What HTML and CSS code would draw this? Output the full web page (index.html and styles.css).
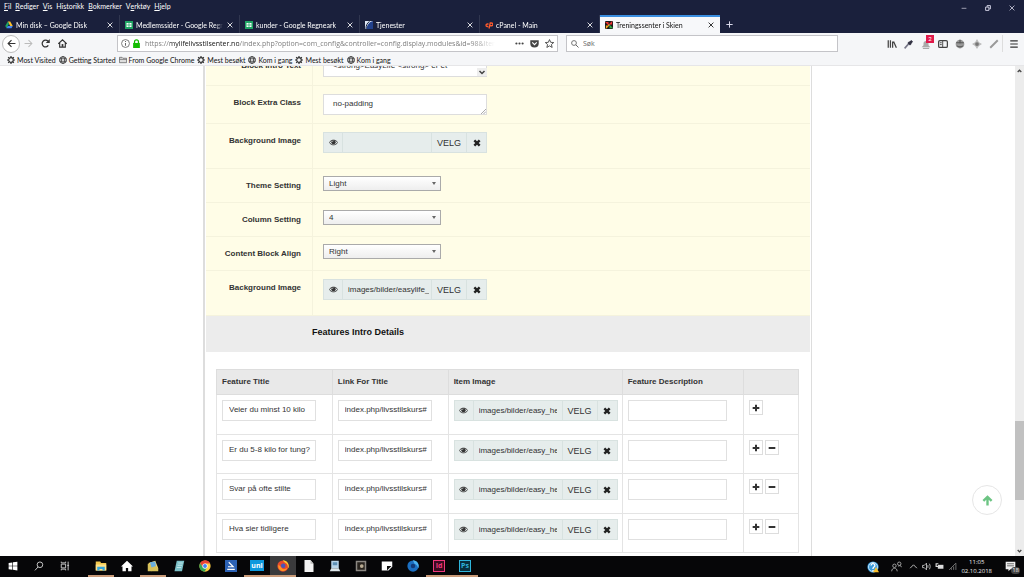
FILE: index.html
```html
<!DOCTYPE html>
<html lang="no">
<head>
<meta charset="utf-8">
<title>Treningssenter i Skien</title>
<link rel="stylesheet" href="styles.css">
</head>
<body>
<svg class="sprite" aria-hidden="true">
  <symbol id="eye" viewBox="0 0 16 12"><path d="M0.5 6C4 0.5 12 0.5 15.5 6 12 11.500 4 11.500 0.500 6z" fill="none" stroke="#333" stroke-width="1.600"/><circle cx="8" cy="5.500" r="3.800" fill="#333"/><path d="M6 5a2 2 0 0 1 2-2" fill="none" stroke="#dfe8e6"/></symbol>
  <symbol id="cross" viewBox="0 0 12 12"><path d="M2 2l8 8M10 2l-8 8" stroke="#222" stroke-width="3.600"/></symbol>
  <symbol id="plus" viewBox="0 0 12 12"><path d="M6 1v10M1 6h10" stroke="#333" stroke-width="3"/></symbol>
  <symbol id="minus" viewBox="0 0 12 12"><path d="M1 6h10" stroke="#333" stroke-width="3"/></symbol>
  <symbol id="close" viewBox="0 0 10 10"><path d="M1 1l8 8M9 1l-8 8" stroke="currentColor" stroke-width="1.400"/></symbol>
  <symbol id="gear" viewBox="0 0 16 16"><circle cx="8" cy="8" r="4.600" fill="none" stroke="#333" stroke-width="2.400"/><path d="M8 0v3M8 13v3M0 8h3M13 8h3M2.300 2.300l2 2M11.700 11.700l2 2M13.700 2.300l-2 2M4.300 11.700l-2 2" stroke="#333" stroke-width="2.400"/></symbol>
  <symbol id="globe" viewBox="0 0 16 16"><circle cx="8" cy="8" r="6.800" fill="none" stroke="#333" stroke-width="1.800"/><ellipse cx="8" cy="8" rx="3.200" ry="6.800" fill="none" stroke="#333" stroke-width="1.500"/><path d="M1 5.500h14M1 10.500h14" stroke="#333" stroke-width="1.500"/></symbol>
  <symbol id="folder" viewBox="0 0 18 16"><path d="M1 2h6l2 2h8v10H1zM1 6.500h16" fill="#ddd" stroke="#555" stroke-width="1.500"/></symbol>
  <symbol id="sheet" viewBox="0 0 16 16"><path d="M0 0h16v16H0z" fill="#1fa463"/><path d="M3 4h10v8H3z" fill="#fff"/><path d="M3 8h10M8 4v8" stroke="#1fa463" stroke-width="1.500"/></symbol>
</svg>

<header class="browser">
  <div class="titlebar">
    <nav class="menu">
      <button><u>F</u>il</button><button><u>R</u>ediger</button><button><u>V</u>is</button><button>Hi<u>s</u>torikk</button><button><u>B</u>okmerker</button><button>V<u>e</u>rktøy</button><button><u>H</u>jelp</button>
    </nav>
    <div class="window-buttons">
      <button aria-label="Minimer"><svg viewBox="0 0 10 10"><path d="M1 5.500h8" stroke="#aab" stroke-width="1.500"/></svg></button>
      <button aria-label="Gjenopprett"><svg viewBox="0 0 10 10"><path d="M1 3.500h5.500V9H1zM3.500 3V1H9v5.500H7" fill="none" stroke="#dde" stroke-width="1.500"/></svg></button>
      <button aria-label="Lukk"><svg viewBox="0 0 10 10"><use href="#close"/></svg></button>
    </div>
  </div>
  <div class="tabs">
    <div class="tab"><svg class="fav" viewBox="0 0 16 16"><path d="M5.500 1h5l5 9h-5z" fill="#fbc02d"/><path d="M5.500 1L0.500 10 3 14.500 8 5.500z" fill="#1da462"/><path d="M5.500 10h10L13 14.500H3z" fill="#4285f4"/></svg><span class="tab-name">Min disk – Google Disk</span><button class="tab-close" aria-label="Lukk fane"><svg><use href="#close"/></svg></button></div>
    <div class="tab"><svg class="fav"><use href="#sheet"/></svg><span class="tab-name">Medlemssider - Google Regneark</span><button class="tab-close" aria-label="Lukk fane"><svg><use href="#close"/></svg></button></div>
    <div class="tab"><svg class="fav"><use href="#sheet"/></svg><span class="tab-name">kunder - Google Regneark</span><button class="tab-close" aria-label="Lukk fane"><svg><use href="#close"/></svg></button></div>
    <div class="tab"><svg class="fav" viewBox="0 0 16 16"><path d="M1 0h15v16H1z" fill="#22418c"/><path d="M16 0C8 2 4 8 3 16H0V0z" fill="#dfe7f5"/><path d="M9 1C4 4 2 9 2 16" fill="none" stroke="#16233f" stroke-width="2"/></svg><span class="tab-name">Tjenester</span><button class="tab-close" aria-label="Lukk fane"><svg><use href="#close"/></svg></button></div>
    <div class="tab"><svg class="fav" viewBox="0 0 16 16"><path d="M7 6H4.500a2.500 2.500 0 0 0 0 5H6.500M8 15L10.500 4H13a2.500 2.500 0 0 1 0 5.500H10.500" fill="none" stroke="#ff5a2c" stroke-width="2.600"/></svg><span class="tab-name">cPanel - Main</span><button class="tab-close" aria-label="Lukk fane"><svg><use href="#close"/></svg></button></div>
    <div class="tab active"><svg class="fav" viewBox="0 0 16 16"><rect width="16" height="16" rx="2" fill="#1a1a1a"/><path d="M8 8L3 3h4M8 8l5-5v4" stroke="#e33" stroke-width="2.500" fill="none"/><path d="M8 8l-5 5V9" stroke="#f9a41a" stroke-width="2.500" fill="none"/><path d="M8 8l5 5H9" stroke="#3a4" stroke-width="2.500" fill="none"/></svg><span class="tab-name">Treningssenter i Skien</span><button class="tab-close" aria-label="Lukk fane"><svg><use href="#close"/></svg></button></div>
    <button class="new-tab" aria-label="Ny fane"><svg viewBox="0 0 10 10"><path d="M5 0.500v9M0.500 5h9" stroke="#dde" stroke-width="1.400"/></svg></button>
  </div>
  <div class="toolbar">
    <div class="nav-buttons">
      <button class="back" aria-label="Tilbake"><svg viewBox="0 0 16 16"><path d="M15 8H2M8 2L2 8l6 6" fill="none" stroke="#333" stroke-width="2"/></svg></button>
      <button aria-label="Frem"><svg viewBox="0 0 16 16"><path d="M1 8h13M8 2l6 6-6 6" fill="none" stroke="#bbb" stroke-width="1.800"/></svg></button>
      <button aria-label="Last på nytt"><svg viewBox="0 0 16 16"><path d="M13 11.500A6 6 0 1 1 12.500 4" fill="none" stroke="#333" stroke-width="2.200"/><path d="M15.500 0v7h-7z" fill="#333"/></svg></button>
      <button aria-label="Hjem"><svg viewBox="0 0 16 16"><path d="M0.500 8.500L8 1.500l7.500 7M3 7v7.500h10V7" fill="none" stroke="#333" stroke-width="2"/><path d="M6.500 9h3v5h-3z" fill="#333"/></svg></button>
    </div>
    <div class="urlbar">
      <svg viewBox="0 0 16 16"><circle cx="8" cy="8" r="7" fill="none" stroke="#666" stroke-width="1.500"/><path d="M8 7v5M8 3.500v2" stroke="#666" stroke-width="1.800"/></svg>
      <svg viewBox="0 0 16 16"><path d="M2 7h12v9H2z" fill="#12bc00"/><path d="M4.500 8V5a3.500 3.500 0 0 1 7 0v3" fill="none" stroke="#12bc00" stroke-width="2.200"/></svg>
      <input class="url" type="text" aria-label="Adresse" value="https://mylifelivsstilsenter.no/index.php?option=com_config&amp;controller=config.display.modules&amp;id=98&amp;Itemid=101">
      <button aria-label="Sidehandlinger"><svg viewBox="0 0 16 16"><g fill="#444"><circle cx="2.500" cy="8" r="1.900"/><circle cx="8" cy="8" r="1.900"/><circle cx="13.500" cy="8" r="1.900"/></g></svg></button>
      <button aria-label="Pocket"><svg viewBox="0 0 16 16"><path d="M0.500 2h15v6a7.500 7 0 0 1-15 0z" fill="#444"/><path d="M4 6l4 4 4-4" fill="none" stroke="#fff" stroke-width="2"/></svg></button>
      <button aria-label="Bokmerk"><svg viewBox="0 0 16 16"><path d="M8 1l2.100 4.900 5.400.4-4.100 3.500 1.300 5.200L8 12.200 3.300 15l1.300-5.200L.5 6.300l5.400-.4z" fill="none" stroke="#444" stroke-width="1.600"/></svg></button>
    </div>
    <label class="search"><svg viewBox="0 0 16 16"><circle cx="6" cy="6" r="4.800" fill="none" stroke="#666" stroke-width="1.800"/><path d="M9.500 9.500L15 15" stroke="#666" stroke-width="2"/></svg><input type="search" aria-label="Søk" placeholder="Søk"></label>
    <div class="extensions">
      <button aria-label="Bibliotek"><svg viewBox="0 0 16 16"><path d="M2 2v12M5.500 2v12M9 4v10M10.500 4l4.500 10" stroke="#444" stroke-width="2"/></svg></button>
      <button aria-label="Pipette"><svg viewBox="0 0 16 16"><path d="M1 15l7-8" stroke="#778" stroke-width="2.500"/><path d="M7 5l4 4M9 7l4-4" stroke="#334" stroke-width="4"/></svg></button>
      <button class="alert" aria-label="Varsler"><svg viewBox="0 0 16 16"><path d="M1 13h14l-3-3V7a4 4 0 0 0-8 0v3z" fill="#aaa"/><path d="M3 15h10" stroke="#999" stroke-width="1.500"/></svg><span class="count">2</span></button>
      <button aria-label="Sidestolpe"><svg viewBox="0 0 16 16"><rect x="1" y="2.500" width="14" height="11" rx="2" fill="none" stroke="#444" stroke-width="2"/><path d="M7.500 3v10M3 6h3M3 9h3" stroke="#444" stroke-width="1.500"/></svg></button>
      <button aria-label="Verktøy"><svg viewBox="0 0 16 16"><circle cx="8" cy="8" r="7" fill="#999"/><path d="M2 6h12M3 11c3 2 7 2 10 0M8 1v6" stroke="#555" stroke-width="1.800" fill="none"/></svg></button>
      <button aria-label="Posisjon"><svg viewBox="0 0 16 16"><path d="M8 0l3 5 5 3-5 3-3 5-3-5-5-3 5-3z" fill="#bbb"/><circle cx="8" cy="8" r="3" fill="#777"/></svg></button>
      <button aria-label="Penn"><svg viewBox="0 0 16 16"><path d="M2 14L14 2" stroke="#999" stroke-width="3"/></svg></button>
      <button class="app-menu" aria-label="Meny"><svg viewBox="0 0 16 16"><path d="M2 3h12M2 8h12M2 13h12" stroke="#333" stroke-width="1.800"/></svg></button>
    </div>
  </div>
  <nav class="bookmarks">
    <a href="#"><svg><use href="#gear"/></svg>Most Visited</a>
    <a href="#"><svg><use href="#globe"/></svg>Getting Started</a>
    <a href="#"><svg><use href="#folder"/></svg>From Google Chrome</a>
    <a href="#"><svg><use href="#gear"/></svg>Mest besøkt</a>
    <a href="#"><svg><use href="#globe"/></svg>Kom i gang</a>
    <a href="#"><svg><use href="#gear"/></svg>Mest besøkt</a>
    <a href="#"><svg><use href="#globe"/></svg>Kom i gang</a>
  </nav>
</header>

<div class="viewport">
  <main class="page">
    <form class="panel">
      <div class="settings">
        <div class="row first"><label for="intro">Block Intro Text</label><div class="field"><span class="area"><textarea id="intro" class="text">&lt;strong&gt;EasyLife &lt;strong&gt; er et</textarea><svg class="down" viewBox="0 0 10 8"><path d="M2.500 3L5 5.500 7.500 3" fill="none" stroke="#444" stroke-width="1.500"/></svg></span></div></div>
        <div class="row"><label for="extra">Block Extra Class</label><div class="field"><span class="area"><textarea id="extra" class="text">no-padding</textarea><svg class="grip" viewBox="0 0 6 6"><path d="M0 6L6 0M3 6l3-3" stroke="#999"/></svg></span></div></div>
        <div class="row tall"><label for="bg1">Background Image</label><div class="field"><div class="media"><button type="button" aria-label="Vis"><svg><use href="#eye"/></svg></button><input id="bg1" type="text"><button type="button">VELG</button><button type="button" aria-label="Fjern"><svg><use href="#cross"/></svg></button></div></div></div>
        <div class="row choice"><label for="theme">Theme Setting</label><div class="field"><span class="pick"><select id="theme"><option>Light</option></select></span></div></div>
        <div class="row choice"><label for="column">Column Setting</label><div class="field"><span class="pick"><select id="column"><option>4</option></select></span></div></div>
        <div class="row choice"><label for="align">Content Block Align</label><div class="field"><span class="pick"><select id="align"><option>Right</option></select></span></div></div>
        <div class="row tall"><label for="bg2">Background Image</label><div class="field"><div class="media"><button type="button" aria-label="Vis"><svg><use href="#eye"/></svg></button><input id="bg2" type="text" value="images/bilder/easylife_"><button type="button">VELG</button><button type="button" aria-label="Fjern"><svg><use href="#cross"/></svg></button></div></div></div>
      </div>
      <h2 class="section">Features Intro Details</h2>
      <table class="features">
        <colgroup><col class="c-title"><col class="c-link"><col class="c-image"><col class="c-desc"><col class="c-tools"></colgroup>
        <thead><tr><th>Feature Title</th><th>Link For Title</th><th>Item Image</th><th>Feature Description</th><th></th></tr></thead>
        <tbody>
          <tr>
            <td><input class="cell" aria-label="Feature Title" value="Veier du minst 10 kilo"></td>
            <td><input class="cell" aria-label="Link For Title" value="index.php/livsstilskurs#"></td>
            <td><div class="media"><button type="button" aria-label="Vis"><svg><use href="#eye"/></svg></button><input aria-label="Item Image" value="images/bilder/easy_hea"><button type="button">VELG</button><button type="button" aria-label="Fjern"><svg><use href="#cross"/></svg></button></div></td>
            <td><input class="cell" aria-label="Feature Description"></td>
            <td><div class="tools"><button type="button" aria-label="Legg til"><svg><use href="#plus"/></svg></button></div></td>
          </tr>
          <tr>
            <td><input class="cell" aria-label="Feature Title" value="Er du 5-8 kilo for tung?"></td>
            <td><input class="cell" aria-label="Link For Title" value="index.php/livsstilskurs#"></td>
            <td><div class="media"><button type="button" aria-label="Vis"><svg><use href="#eye"/></svg></button><input aria-label="Item Image" value="images/bilder/easy_hea"><button type="button">VELG</button><button type="button" aria-label="Fjern"><svg><use href="#cross"/></svg></button></div></td>
            <td><input class="cell" aria-label="Feature Description"></td>
            <td><div class="tools"><button type="button" aria-label="Legg til"><svg><use href="#plus"/></svg></button><button type="button" aria-label="Fjern rad"><svg><use href="#minus"/></svg></button></div></td>
          </tr>
          <tr>
            <td><input class="cell" aria-label="Feature Title" value="Svar på ofte stilte"></td>
            <td><input class="cell" aria-label="Link For Title" value="index.php/livsstilskurs#"></td>
            <td><div class="media"><button type="button" aria-label="Vis"><svg><use href="#eye"/></svg></button><input aria-label="Item Image" value="images/bilder/easy_hea"><button type="button">VELG</button><button type="button" aria-label="Fjern"><svg><use href="#cross"/></svg></button></div></td>
            <td><input class="cell" aria-label="Feature Description"></td>
            <td><div class="tools"><button type="button" aria-label="Legg til"><svg><use href="#plus"/></svg></button><button type="button" aria-label="Fjern rad"><svg><use href="#minus"/></svg></button></div></td>
          </tr>
          <tr>
            <td><input class="cell" aria-label="Feature Title" value="Hva sier tidligere"></td>
            <td><input class="cell" aria-label="Link For Title" value="index.php/livsstilskurs#"></td>
            <td><div class="media"><button type="button" aria-label="Vis"><svg><use href="#eye"/></svg></button><input aria-label="Item Image" value="images/bilder/easy_hea"><button type="button">VELG</button><button type="button" aria-label="Fjern"><svg><use href="#cross"/></svg></button></div></td>
            <td><input class="cell" aria-label="Feature Description"></td>
            <td><div class="tools"><button type="button" aria-label="Legg til"><svg><use href="#plus"/></svg></button><button type="button" aria-label="Fjern rad"><svg><use href="#minus"/></svg></button></div></td>
          </tr>
        </tbody>
      </table>
    </form>
    <a class="to-top" href="#" aria-label="Til toppen"><svg viewBox="0 0 12 12"><path d="M6 11.500V3M1.500 6.500L6 2l4.500 4.500" fill="none" stroke="#6cc483" stroke-width="2.600"/></svg></a>
  </main>
  <div class="scrollbar">
    <svg viewBox="0 0 10 10"><path d="M3 6l2-2 2 2" fill="none" stroke="#444" stroke-width="1.500"/></svg>
    <div class="track"><div class="thumb"></div></div>
    <svg viewBox="0 0 10 10"><path d="M3 4l2 2 2-2" fill="none" stroke="#444" stroke-width="1.500"/></svg>
  </div>
</div>

<footer class="taskbar">
  <div class="apps">
    <button aria-label="Start"><svg viewBox="0 0 16 16"><path d="M1 3l6-.8v5.300H1zM8 2l7-1v6.500H8zM1 8.500h6v5.300L1 13zM8 8.500h7V15l-7-1z" fill="#fff"/></svg></button>
    <button aria-label="Søk"><svg viewBox="0 0 16 16"><circle cx="9.500" cy="6" r="4.500" fill="none" stroke="#ddd" stroke-width="1.400"/><path d="M6.500 9.500L1.500 15" stroke="#ddd" stroke-width="1.400"/></svg></button>
    <button aria-label="Oppgavevisning"><svg viewBox="0 0 16 16"><path d="M2 5h7v6H2zM2 1v2h7V1M2 15v-2h7v2M13 1v14M11.500 7h3" fill="none" stroke="#ccc" stroke-width="1.500"/></svg></button>
  </div>
  <div class="apps pinned">
    <button class="open" aria-label="Filutforsker"><svg viewBox="0 0 16 16"><path d="M1 2h6l1 2h7v10H1z" fill="#f3c84f"/><path d="M1 6h14v8H1z" fill="#fde28b"/><path d="M3 14V9h10v5h-3v-2H6v2z" fill="#35a5dc"/></svg></button>
    <button aria-label="Hjem"><svg viewBox="0 0 16 16"><path d="M0 8.500L8 1l8 7.500h-2V15H9.500v-4.500h-3V15H2V8.500z" fill="#fff"/></svg></button>
    <button class="open" aria-label="Notater"><svg viewBox="0 0 16 16"><path d="M2 4l9-3 4 10-9 4z" fill="#f5d56a"/><path d="M1 5h7l7 6v4H1z" fill="#d7c15a"/><path d="M4 3l7-1 1 6-6 2z" fill="#6aaede"/></svg></button>
    <button aria-label="Notisblokk"><svg viewBox="0 0 16 16"><path d="M5 1h10l-3 14H2z" fill="#7cc0c8"/><path d="M7 4h6M6 7h6M5 10h6" stroke="#d5f1f2"/></svg></button>
    <button aria-label="Chrome"><svg viewBox="0 0 16 16"><circle cx="8" cy="8" r="7.500" fill="#ffcd40"/><path d="M1.500 4.200A7.500 7.500 0 0 1 14.700 4.500H8L5 9.500z" fill="#ea4335"/><path d="M1.500 4.200A7.500 7.500 0 0 0 7.500 15.500L10.500 10 5 9.500z" fill="#34a853"/><circle cx="8" cy="8" r="3.500" fill="#fff"/><circle cx="8" cy="8" r="2.600" fill="#4285f4"/></svg></button>
    <button aria-label="Skanner"><svg viewBox="0 0 16 16"><path d="M0 0h16v16H0z" fill="#2c62b5"/><path d="M5 3l6 6H4M3 12.500h10" fill="none" stroke="#fff" stroke-width="1.500"/></svg></button>
    <button class="open uni" aria-label="Uni"><span>uni</span></button>
    <button class="open current" aria-label="Firefox"><svg viewBox="0 0 16 16"><circle cx="8" cy="8" r="7.500" fill="#e8492c"/><path d="M8 .5A7.500 7.500 0 0 1 15 11c-1-2 0-4-2-6s-4-2-5-4.500z" fill="#ffcb2d"/><path d="M2 6a7 7 0 0 0 3 8c4 2 8 0 9-4-3 3-7 3-8 0z" fill="#ff9423"/><circle cx="8.300" cy="7.500" r="3" fill="#4a56b8"/></svg></button>
    <button aria-label="Dokument"><svg viewBox="0 0 16 16"><path d="M2 0h8l4 5v11H2z" fill="#f4f4f4"/><path d="M10 0v5h4" fill="#bbb"/></svg></button>
    <button aria-label="PC"><svg viewBox="0 0 16 16"><path d="M3 1h10v10H3z" fill="#b9d5ea"/><path d="M5 3h6v4H5z" fill="#5d8fb5"/><path d="M1 15l2-4h10l2 4z" fill="#dde6ea"/></svg></button>
    <button aria-label="Kamera"><svg viewBox="0 0 16 16"><path d="M1 1h14v14H1z" fill="#8b8782"/><path d="M3 3h10v10H3z" fill="#28231e"/><circle cx="9" cy="8" r="2.500" fill="#b8aa92"/></svg></button>
    <button aria-label="Lapper"><svg viewBox="0 0 16 16"><path d="M1 2h14v7l-5 5H1z" fill="#fff"/><path d="M8 8h6l-6 6z" fill="#111"/></svg></button>
    <button aria-label="Utviklerutgave"><svg viewBox="0 0 16 16"><circle cx="8" cy="8" r="7.500" fill="#1b6fc2"/><path d="M8 .5A7.500 7.500 0 0 1 15 11c-1-3-2-5-5-6z" fill="#4db2ef"/><circle cx="8" cy="8" r="3" fill="#123a78"/></svg></button>
    <button class="open adobe id" aria-label="InDesign"><span>Id</span></button>
    <button class="open adobe ps" aria-label="Photoshop"><span>Ps</span></button>
  </div>
  <div class="tray">
    <svg class="help" viewBox="0 0 16 16"><circle cx="8" cy="8" r="7.500" fill="#3a9bdc"/><circle cx="8" cy="8" r="6" fill="none" stroke="#e8f5ff"/><path d="M5.500 6a2.500 2.500 0 1 1 3.500 2.300L8 9.500v1M8 12v1.500" fill="none" stroke="#fff" stroke-width="1.800"/><path d="M12 8l4 7H8z" fill="#fbc02d"/></svg>
    <svg class="people" viewBox="0 0 16 16"><circle cx="5" cy="7" r="2.500" fill="none" stroke="#aaa" stroke-width="1.300"/><path d="M1 15c0-6 8-6 8 0M11 8c1-2 4-2 4 1" fill="none" stroke="#aaa" stroke-width="1.300"/><circle cx="12" cy="4" r="2.500" fill="none" stroke="#aaa" stroke-width="1.300"/></svg>
    <svg viewBox="0 0 16 16"><path d="M2 11l6-6 6 6" fill="none" stroke="#ccc" stroke-width="1.600"/></svg>
    <svg viewBox="0 0 16 16"><path d="M1 6h3l4-4v12l-4-4H1zM10.500 5.500v5M13 3c2 3 2 7 0 10" fill="none" stroke="#ccc" stroke-width="1.500"/></svg>
    <svg viewBox="0 0 16 16"><path d="M5 5h10v7H5z" fill="#ddd"/><path d="M1 3h5M2 3v5h5" fill="none" stroke="#ddd" stroke-width="2"/></svg>
    <svg viewBox="0 0 16 16"><path d="M2 14L14 2v12M6 14V11M10 14V8" fill="none" stroke="#777" stroke-width="1.600"/></svg>
    <time class="clock" datetime="2018-10-02T11:05"><span>11:05</span><span>02.10.2018</span></time>
    <button class="notices" aria-label="Handlingssenter"><svg viewBox="0 0 16 16"><path d="M1 1h14v11H8l-3 3v-3H1z" fill="#eee"/><path d="M3 4h10M3 7h10" stroke="#333"/></svg><span>18</span></button>
  </div>
</footer>
</body>
</html>
```
FILE: styles.css
```css
* { box-sizing: border-box; }
body {
  margin: 0;
  height: 100vh;
  display: flex;
  flex-direction: column;
  overflow: hidden;
  font-family: "Liberation Sans", Arial, sans-serif;
  font-size: 8px;
  color: #333;
}
button, input, select, textarea {
  margin: 0;
  padding: 0;
  border: 0;
  border-radius: 0;
  background: none;
  font: inherit;
  color: inherit;
  outline: 0;
  min-width: 0;
}
button { display: flex; align-items: center; justify-content: center; }
svg { display: block; flex: none; }
.sprite { position: absolute; width: 0; height: 0; }

/* Browser frame */
.browser { flex: none; font-family: Lato, "Open Sans", sans-serif; font-size: 7px; }
.titlebar { display: flex; justify-content: space-between; height: 15px; background: #1a203c; color: #fff; }
.menu { display: flex; align-items: center; gap: 4px; padding-left: 4px; height: 12px; }
.window-buttons { display: flex; align-items: center; color: #ccd; }
.window-buttons button { width: 24px; height: 15px; }
.window-buttons svg { width: 6px; height: 6px; }
.tabs { display: flex; height: 18px; background: #1a203c; color: #fff; }
.tab { display: flex; align-items: center; flex: 0 1 120px; min-width: 0; padding: 1px 6px 0 5px; border-right: 1px solid #30364f; }
.fav { width: 8px; height: 8px; margin-right: 3px; }
.tab-name { flex: 1; overflow: hidden; white-space: nowrap; mask-image: linear-gradient(90deg, #000 calc(100% - 8px), transparent); }
.tab-close { margin-left: 4px; }
.tab-close svg { width: 6px; height: 6px; }
.tab.active { padding-top: 0; background: #f7f8fa; color: #111; border-top: 2px solid #3a8ee0; border-right: 0; }
.new-tab { width: 18px; }
.new-tab svg { width: 7px; height: 7px; }
.toolbar { display: flex; align-items: center; height: 21px; background: #f5f6f8; }
.nav-buttons { display: flex; flex: none; width: 117px; padding-left: 2px; align-items: center; }
.nav-buttons button { width: 17px; height: 17px; }
.nav-buttons .back { width: 18px; height: 18px; border: 1px solid #bbb; border-radius: 50%; background: #fff; }
.nav-buttons svg { width: 9px; height: 9px; }
.urlbar { display: flex; align-items: center; flex: 445 1 0; height: 17px; padding: 0 1px 0 3px; gap: 2px; border: 1px solid #c4c4c8; background: #fff; }
.urlbar svg { width: 9px; height: 9px; }
.urlbar button { width: 13px; }
.urlbar .url, .search input { font-family: "Open Sans", "Noto Sans", sans-serif; }
.urlbar .url {
  flex: 1;
  margin: 0 16px 0 2px;
  color: transparent;
  background: linear-gradient(90deg, #777 25px, #111 25px, #111 94px, #777 94px, #777 calc(100% - 24px), transparent) text;
}
.search { display: flex; align-items: center; flex: 268 1 0; height: 17px; margin-left: 8px; padding: 0 4px; gap: 4px; border: 1px solid #c4c4c8; background: #fff; }
.search svg { width: 8px; height: 8px; }
.search input { flex: 1; }
.search input::placeholder { color: #666; opacity: 1; }
.extensions { display: flex; align-items: center; flex: none; padding-left: 45px; }
.extensions button { width: 17px; height: 17px; }
.extensions svg { width: 10px; height: 10px; }
.extensions .alert { position: relative; }
.count { position: absolute; top: 0; right: 0; width: 8px; height: 8px; background: #e0194b; color: #fff; font-size: 6px; line-height: 8px; }
.extensions .app-menu { width: 22px; border-left: 1px solid #ddd; }
.bookmarks { display: flex; align-items: center; height: 12px; padding-left: 7px; gap: 3px; background: #f5f6f8; border-bottom: 1px solid #e6e6e8; }
.bookmarks a { display: flex; align-items: center; gap: 2px; color: #111; text-decoration: none; white-space: nowrap; }
.bookmarks svg { width: 8px; height: 8px; }

/* Page */
.viewport { display: flex; flex: 1; min-height: 0; }
.page { position: relative; flex: 1; overflow: hidden; background: #fff; }
.panel { width: 60%; margin: -18px auto 0; padding: 0 1px; border: 1px solid #ddd; border-width: 0 1px 0 2px; min-height: 120%; }
.settings { background: #fffde7; }
.row { display: grid; grid-template-columns: 107px 1fr; min-height: 38px; border-bottom: 1px solid #f5f3dd; }
.row > label { padding: 12px 11px 0 0; border-right: 1px solid #f5f3dd; text-align: right; font-weight: bold; line-height: 10px; }
.row.first > label { padding-top: 13px; }
.field { padding: 8px 10px 0; }
.row.tall { min-height: 45px; }
.row.choice { min-height: 34px; }
.row.choice .field { padding-top: 7px; }
.area { position: relative; display: block; width: 164px; }
.text { display: block; width: 100%; height: 21px; padding: 4px 9px; border: 1px solid #ddd; background: #fff; line-height: 10px; resize: none; overflow: hidden; }
.down { position: absolute; right: 0; bottom: 1px; width: 10px; height: 8px; background: #eee; }
.grip { position: absolute; right: 1px; bottom: 1px; width: 5px; height: 5px; }
.media { display: flex; width: 164px; height: 21px; border: 1px solid #d8e2e0; background: #e6edec; }
.media button { width: 20px; border-left: 1px solid #d8e2e0; }
.media button:first-child { width: 18px; border-left: 0; }
.media button:nth-of-type(2) { width: 35px; font-size: 9px; }
.media input { flex: 1; padding: 0 2px 0 5px; border-left: 1px solid #d8e2e0; }
.features .media input { padding-right: 5px; }
.media svg { width: 8px; height: 8px; }
.media button:first-child svg { width: 9px; height: 7px; }
.pick { position: relative; display: block; width: 118px; }
.pick::after { content: ""; position: absolute; right: 5px; top: 6px; border: 2px solid transparent; border-top: 3px solid #666; }
.pick select { display: block; width: 100%; height: 15px; padding: 0 5px; border: 1px solid #aaa; appearance: none; background: linear-gradient(#fff, #eee); }
.section { margin: 0; padding: 10px 106px 14px; background: #ececec; color: #111; font-size: 9px; line-height: 12px; }
.features { width: calc(100% - 21px); margin: 17px 11px 0 10px; border-collapse: collapse; table-layout: fixed; }
.c-title, .c-link { width: 19.9%; }
.c-image { width: 29.9%; }
.c-desc { width: 20.8%; }
.features th { height: 25px; padding: 0 5px 2px; border: 1px solid #ddd; background: #e9e9e9; text-align: left; }
.features td { height: 40px; padding: 5px 5px 0; border: 1px solid #e4e4e4; vertical-align: top; }
.features tr:nth-child(even) td { height: 39px; }
.cell { display: block; width: 90%; height: 21px; padding: 0 0 2px 6px; border: 1px solid #e0e0e0; background: #fff; }
.tools { display: flex; gap: 2px; }
.tools button { width: 14px; height: 15px; border: 1px solid #ddd; }
.tools svg { width: 8px; height: 8px; }
.to-top { position: absolute; right: 13px; bottom: 41px; display: flex; align-items: center; justify-content: center; width: 30px; height: 30px; border: 1px solid #e6e6e6; border-radius: 50%; background: #fff; }
.to-top svg { width: 11px; height: 11px; }
.scrollbar { display: flex; flex-direction: column; width: 9px; background: #ececec; }
.scrollbar svg { width: 9px; height: 10px; }
.track { display: grid; flex: 1; grid-template-rows: 345fr 79fr 46fr; }
.thumb { grid-row: 2; background: #c1c1c1; }

/* Taskbar */
.taskbar { display: flex; flex: none; height: 21px; background: #060608; color: #eee; font-family: "Open Sans", "Noto Sans", sans-serif; font-size: 7px; }
.apps { display: flex; }
.apps button { width: 26px; border-bottom: 2px solid transparent; }
.apps svg { width: 12px; height: 12px; }
.apps:first-child svg { width: 10px; height: 10px; }
.pinned { margin-left: 10px; }
.apps .open { border-bottom-color: #c99a78; }
.apps .current { background: #3a3a3c; }
.uni span { width: 14px; background: #0d99dd; color: #fff; font-weight: bold; line-height: 11px; }
.adobe span { width: 12px; border: 1px solid currentColor; font-weight: bold; line-height: 10px; }
.id { color: #f0387c; }
.ps { color: #2fb5dc; }
.id span { background: #3a0b20; }
.ps span { background: #08303e; }
.tray { display: flex; align-items: center; gap: 4px; margin-left: auto; }
.tray svg { width: 9px; height: 9px; }
.tray .help { width: 12px; height: 12px; }
.tray .people { width: 11px; height: 11px; margin: 0 3px 0 8px; }
.clock { display: flex; flex-direction: column; align-items: center; font-size: 6px; line-height: 9px; }
.notices { position: relative; width: 28px; height: 21px; }
.notices svg { width: 11px; height: 11px; }
.notices span { position: absolute; right: 4px; bottom: 3px; padding: 0 1px; border-radius: 4px; background: #444; font-size: 6px; line-height: 7px; }
```
